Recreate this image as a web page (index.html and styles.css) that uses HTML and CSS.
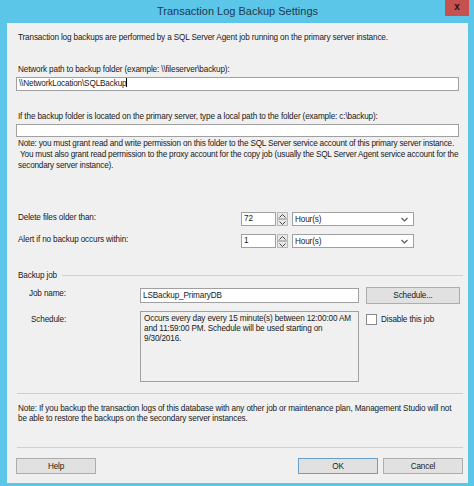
FILE: index.html
```html
<!DOCTYPE html>
<html lang="en">
<head>
  <meta charset="UTF-8">
  <title>Transaction Log Backup Settings</title>
  <link rel="stylesheet" href="styles.css">
</head>
<body>

  <div class="window">
    <div class="titlebar">
      <span class="title">Transaction Log Backup Settings</span>
      <div class="close">x</div>
    </div>

    <div class="client">
      <p class="intro">Transaction log backups are performed by a SQL Server Agent job running on the primary server instance.</p>

      <label class="label first">Network path to backup folder (example: \\fileserver\backup):</label>
      <div class="textbox tall">\\NetworkLocation\SQLBackup<span class="caret"></span></div>

      <label class="label second">If the backup folder is located on the primary server, type a local path to the folder (example: c:\backup):</label>
      <div class="textbox"></div>

      <p class="note">Note: you must grant read and write permission on this folder to the SQL Server service account of this primary server instance.<br>
      &nbsp;You must also grant read permission to the proxy account for the copy job (usually the SQL Server Agent service account for the secondary server instance).</p>

      <div class="retention">
        <div class="ret-row">
          <span class="ret-label">Delete files older than:</span>
          <div class="spin">
            <div class="spin-value">72</div>
            <div class="spin-buttons">
              <div class="spin-btn"><svg width="7" height="4" viewBox="0 0 7 4"><path d="M0.5 3.5 L3.5 0.5 L6.5 3.5" fill="none" stroke="#444" stroke-width="1"/></svg></div>
              <div class="spin-btn"><svg width="7" height="4" viewBox="0 0 7 4"><path d="M0.5 0.5 L3.5 3.5 L6.5 0.5" fill="none" stroke="#444" stroke-width="1"/></svg></div>
            </div>
          </div>
          <div class="combo">
            <span>Hour(s)</span>
            <svg width="7" height="5" viewBox="0 0 7 5"><path d="M0.5 1 L3.5 4 L6.5 1" fill="none" stroke="#555" stroke-width="1.1"/></svg>
          </div>
        </div>
        <div class="ret-row">
          <span class="ret-label">Alert if no backup occurs within:</span>
          <div class="spin">
            <div class="spin-value">1</div>
            <div class="spin-buttons">
              <div class="spin-btn"><svg width="7" height="4" viewBox="0 0 7 4"><path d="M0.5 3.5 L3.5 0.5 L6.5 3.5" fill="none" stroke="#444" stroke-width="1"/></svg></div>
              <div class="spin-btn"><svg width="7" height="4" viewBox="0 0 7 4"><path d="M0.5 0.5 L3.5 3.5 L6.5 0.5" fill="none" stroke="#444" stroke-width="1"/></svg></div>
            </div>
          </div>
          <div class="combo">
            <span>Hour(s)</span>
            <svg width="7" height="5" viewBox="0 0 7 5"><path d="M0.5 1 L3.5 4 L6.5 1" fill="none" stroke="#555" stroke-width="1.1"/></svg>
          </div>
        </div>
      </div>

      <div class="group-head">
        <span>Backup job</span>
        <div class="group-line"></div>
      </div>

      <div class="job-row">
        <span class="job-label">Job name:</span>
        <div class="textbox job-name">LSBackup_PrimaryDB</div>
        <button class="btn schedule-btn">Schedule...</button>
      </div>

      <div class="job-row schedule-row">
        <span class="job-label">Schedule:</span>
        <div class="schedule-text">Occurs every day every 15 minute(s) between 12:00:00 AM and 11:59:00 PM. Schedule will be used starting on 9/30/2016.</div>
        <div class="check">
          <div class="check-box"></div>
          <span>Disable this job</span>
        </div>
      </div>

      <div class="separator sep-top"></div>

      <p class="note bottom-note">Note: If you backup the transaction logs of this database with any other job or maintenance plan, Management Studio will not be able to restore the backups on the secondary server instances.</p>

      <div class="separator sep-bottom"></div>

      <div class="footer">
        <button class="btn">Help</button>
        <div class="footer-right">
          <button class="btn default">OK</button>
          <button class="btn">Cancel</button>
        </div>
      </div>
    </div>
  </div>

</body>
</html>
```

FILE: styles.css
```css
body {
  margin: 0;
  padding: 0;
  background-color: #5bc6e7;
  font-family: "Liberation Sans", Arial, sans-serif;
  font-size: 8.2px;
  letter-spacing: -0.15px;
  color: #1a1a1a;
}
.window {
  width: 474px;
  height: 486px;
  background-color: #5bc6e7;
  padding: 0 6px 3px 7px;
  box-sizing: border-box;
}
.titlebar {
  position: relative;
  height: 23px;
  display: flex;
  align-items: center;
  justify-content: center;
}
.title {
  font-size: 11px;
  letter-spacing: 0;
  color: #1e3a52;
  margin-top: -1px;
}
.close {
  position: absolute;
  top: 0;
  right: -1px;
  width: 24px;
  height: 16px;
  background-color: #c75050;
  color: #2a1414;
  font-weight: bold;
  font-size: 10px;
  letter-spacing: 0;
  line-height: 14px;
  text-align: center;
}
.client {
  height: 460px;
  background-color: #f0f0f0;
  padding: 9px 5px 0 9px;
  box-sizing: border-box;
  display: flex;
  flex-direction: column;
}
.intro, .note, .label {
  margin: 0;
  padding-left: 2px;
  line-height: 11px;
  display: block;
}
.label.first {
  margin-top: 21px;
}
.label.second {
  margin-top: 20px;
}
.textbox {
  height: 13px;
  margin-top: 2px;
  margin-right: 4px;
  background-color: #fff;
  border: 1px solid #a0a0a0;
  box-sizing: border-box;
  padding-left: 2px;
  line-height: 11px;
}
.textbox.tall {
  height: 14px;
  line-height: 12px;
}
.caret {
  display: inline-block;
  width: 1px;
  height: 9px;
  background-color: #000;
  vertical-align: -1px;
}
.note {
  margin-top: 1px;
  margin-right: -3px;
  letter-spacing: -0.2px;
}
.retention {
  margin-top: 41px;
  display: flex;
  flex-direction: column;
  gap: 8px;
}
.ret-row {
  display: flex;
  align-items: center;
  height: 14px;
}
.ret-label {
  width: 225px;
  padding-left: 2px;
  box-sizing: border-box;
  margin-top: -3px;
}
.spin {
  display: flex;
  height: 14px;
}
.spin-value {
  width: 35px;
  background-color: #fff;
  border: 1px solid #a0a0a0;
  box-sizing: border-box;
  padding-left: 2px;
  line-height: 12px;
}
.spin-buttons {
  width: 11px;
  margin-left: 1px;
  display: flex;
  flex-direction: column;
}
.spin-btn {
  flex: 1;
  background-color: #e8e8e8;
  border: 1px solid #b8b8b8;
  display: flex;
  align-items: center;
  justify-content: center;
}
.combo {
  width: 122px;
  height: 14px;
  margin-left: 4px;
  background-color: #fff;
  border: 1px solid #a0a0a0;
  box-sizing: border-box;
  display: flex;
  align-items: center;
  justify-content: space-between;
  padding: 0 5px 0 2px;
}
.group-head {
  margin-top: 22px;
  display: flex;
  align-items: center;
  line-height: 11px;
  padding-left: 2px;
}
.group-line {
  flex: 1;
  height: 1px;
  margin-left: 5px;
  margin-top: -1px;
  background-color: #d0d0d0;
}
.job-row {
  margin-top: 6px;
  display: flex;
  align-items: flex-start;
}
.job-label {
  width: 124px;
  box-sizing: border-box;
  padding-left: 13px;
  line-height: 11px;
  margin-top: 1px;
}
.textbox.job-name {
  width: 219px;
  height: 15px;
  margin: 1px 0 0 0;
  line-height: 13px;
}
.btn {
  font-family: "Liberation Sans", Arial, sans-serif;
  font-size: 8.2px;
  letter-spacing: -0.15px;
  color: #1a1a1a;
  background-color: #e1e1e1;
  border: 1px solid #adadad;
  width: 80px;
  height: 17px;
  padding: 0;
}
.schedule-btn {
  width: 94px;
  margin-left: 7px;
}
.schedule-row {
  margin-top: 7px;
}
.schedule-row .job-label {
  padding-left: 15px;
  margin-top: 3px;
}
.schedule-text {
  width: 219px;
  height: 71px;
  border: 1px solid #a0a0a0;
  box-sizing: border-box;
  padding: 2px 3px;
  line-height: 10px;
  background-color: #f0f0f0;
}
.check {
  display: flex;
  align-items: center;
  margin-left: 7px;
  margin-top: 3px;
}
.check-box {
  width: 9px;
  height: 9px;
  background-color: #fff;
  border: 1px solid #8a8a8a;
  margin-right: 4px;
}
.separator {
  height: 1px;
  margin-left: 1px;
  background-color: #cfcfcf;
}
.sep-top {
  margin-top: 11px;
}
.bottom-note {
  margin-top: 10px;
  line-height: 10px;
  margin-right: 4px;
  letter-spacing: -0.15px;
}
.sep-bottom {
  margin-top: 23px;
}
.footer {
  margin-top: 10px;
  display: flex;
  justify-content: space-between;
}
.footer .btn {
  height: 16px;
}
.footer-right {
  display: flex;
  gap: 5px;
}
.btn.default {
  border-color: #6b9fc9;
}
```
